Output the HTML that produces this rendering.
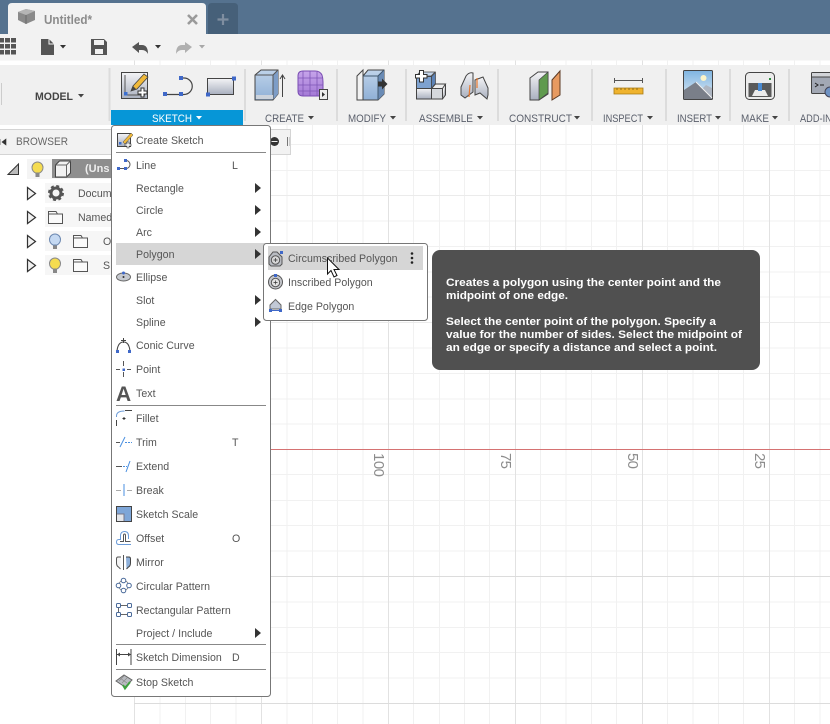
<!DOCTYPE html>
<html><head><meta charset="utf-8"><style>
html,body{margin:0;padding:0;background:#fff;width:830px;height:724px;overflow:hidden}
svg{display:block;font-family:"Liberation Sans",sans-serif}
.m{font-size:10.6px;fill:#555;letter-spacing:.03px}
.tb{font-size:11px;fill:#5a5f6b}
.t{font-size:11px;font-weight:bold;fill:#fff}
.mj{stroke:#e2e2e2;fill:none}
.mn{stroke:#f1f1f1;fill:none}
</style></head><body>
<svg width="830" height="724" viewBox="0 0 830 724" xmlns="http://www.w3.org/2000/svg">
<defs>
<linearGradient id="bl" x1="0" y1="0" x2="0" y2="1"><stop offset="0" stop-color="#bfd3ea"/><stop offset="1" stop-color="#8fb0d6"/></linearGradient>
<linearGradient id="gr" x1="0" y1="0" x2="0" y2="1"><stop offset="0" stop-color="#f4f4f6"/><stop offset="1" stop-color="#a9b0bf"/></linearGradient>
<linearGradient id="sky" x1="0" y1="0" x2="0" y2="1"><stop offset="0" stop-color="#7fb4e0"/><stop offset="1" stop-color="#e0ecf6"/></linearGradient>
<linearGradient id="pu" x1="0" y1="0" x2="0" y2="1"><stop offset="0" stop-color="#c6a4ea"/><stop offset="1" stop-color="#a47ad6"/></linearGradient>
</defs>
<rect width="830" height="724" fill="#fff"/>

<!-- grid -->
<path class="mn" d="M160 60V724M185.500 60V724M210.500 60V724M236 60V724M287 60V724M312.500 60V724M337.500 60V724M363 60V724M413.500 60V724M439.500 60V724M464.500 60V724M489.500 60V724M540.500 60V724M566 60V724M591.500 60V724M616.500 60V724M667.500 60V724M693 60V724M718.500 60V724M743.500 60V724M794.500 60V724M820 60V724"/>
<path class="mn" d="M134 93.500H830M144 119H830M144 144.500H830M144 170.500H830M144 221H830M144 246.500H830M144 272H830M144 297H830M144 348H830M144 373.500H830M144 399H830M144 424H830M134 474.500H830M134 500.500H830M134 525.500H830M134 551H830M134 602H830M134 627.500H830M134 652.500H830M134 678H830"/>
<path class="mj" d="M134.500 60V724M261.500 60V724M388.500 60V724M515.500 60V724M642.500 60V724M769.500 60V724"/>
<path d="M134 195.500H830M134 322.500H830" stroke="#ebebeb" fill="none"/>
<path d="M134 576.500H830M134 703.500H830" stroke="#dcdcdc" fill="none"/>
<path d="M134 449.500H830" stroke="#d57272" fill="none"/>
<g font-size="15" fill="#8c8c8c">
<text transform="translate(374,453) rotate(90)" textLength="24">100</text>
<text transform="translate(501,453) rotate(90)" textLength="16">75</text>
<text transform="translate(628,453) rotate(90)" textLength="16">50</text>
<text transform="translate(755,453) rotate(90)" textLength="16">25</text>
</g>

<!-- title bar -->
<rect width="830" height="34" fill="#55728f"/>
<path d="M8 34V7q0-4 4-4H202q4 0 4 4V34Z" fill="#f2f2f2"/>
<path d="M208 34V7q0-4 4-4H234q4 0 4 4V34Z" fill="#466079"/>
<path d="M18 12l8-3 9 2v9l-9 4-8-4Z" fill="#8a8a8a"/><path d="M18 12l8 3 9-4-9-2Z" fill="#b5b5b5"/><path d="M26 15v9" stroke="#6a6a6a"/>
<text x="44" y="24" font-size="12.500" font-weight="bold" fill="#8b8b8b" textLength="48" lengthAdjust="spacingAndGlyphs">Untitled*</text>
<path d="M188 15l9 9M197 15l-9 9" stroke="#9a9a9a" stroke-width="2.600"/>
<path d="M223 14v11M217.500 19.500h11" stroke="#7f8ea0" stroke-width="2.200"/>

<!-- quick access -->
<rect y="34" width="830" height="26.500" fill="#f2f2f2"/>
<g fill="#555"><rect x="-1" y="38" width="5" height="4.500"/><rect x="5" y="38" width="5" height="4.500"/><rect x="11" y="38" width="5" height="4.500"/><rect x="-1" y="44" width="5" height="4.500"/><rect x="5" y="44" width="5" height="4.500"/><rect x="11" y="44" width="5" height="4.500"/><rect x="-1" y="50" width="5" height="4.500"/><rect x="5" y="50" width="5" height="4.500"/><rect x="11" y="50" width="5" height="4.500"/></g>
<path d="M41 39H49L54 44V55H41Z" fill="#555"/><path d="M49 39V44H54" fill="none" stroke="#f2f2f2"/>
<path d="M60 45h6l-3 3.500Z" fill="#333"/>
<path d="M91 39H104L107 42V55H91Z" fill="#555"/><rect x="94" y="40" width="10" height="5" fill="#f2f2f2"/><rect x="95" y="49" width="8" height="5" fill="#f2f2f2"/>
<path d="M132 47l7-5v3h3q6 0 6 9q-2-4-6-4h-3v3Z" fill="#555"/>
<path d="M155 45h6l-3 3.500Z" fill="#333"/>
<path d="M192 47l-7-5v3h-3q-6 0-6 9q2-4 6-4h3v3Z" fill="#b0b0b0"/>
<path d="M199 45h6l-3 3.500Z" fill="#a8a8a8"/>

<!-- toolbar -->
<rect y="65" width="830" height="60" fill="#f0f0f0"/>
<rect x="1" y="83" width="1" height="22" fill="#ccc"/>
<text x="35" y="100" font-size="11" font-weight="bold" fill="#444" textLength="38" lengthAdjust="spacingAndGlyphs">MODEL</text>
<path d="M78 94h6l-3 3.500Z" fill="#444"/>
<g fill="#dcdcdc"><rect x="108.500" y="68" width="2" height="53"/><rect x="244" y="69" width="2" height="52"/><rect x="336" y="69" width="2" height="52"/><rect x="405" y="69" width="2" height="52"/><rect x="497" y="69" width="2" height="52"/><rect x="591" y="69" width="2" height="52"/><rect x="665" y="69" width="2" height="52"/><rect x="729" y="69" width="2" height="52"/><rect x="788" y="69" width="2" height="52"/></g>
<rect x="111" y="110" width="132" height="15" fill="#0696d7"/>
<text x="152" y="122" font-size="11" fill="#fff" textLength="40" lengthAdjust="spacingAndGlyphs">SKETCH</text>
<path d="M196 116h6l-3 3.500Z" fill="#fff"/>
<text class="tb" x="265" y="122" textLength="39" lengthAdjust="spacingAndGlyphs">CREATE</text><path d="M308 116h6l-3 3.500Z" fill="#444"/>
<text class="tb" x="348" y="122" textLength="38" lengthAdjust="spacingAndGlyphs">MODIFY</text><path d="M390 116h6l-3 3.500Z" fill="#444"/>
<text class="tb" x="419" y="122" textLength="54" lengthAdjust="spacingAndGlyphs">ASSEMBLE</text><path d="M477 116h6l-3 3.500Z" fill="#444"/>
<text class="tb" x="509" y="122" textLength="63" lengthAdjust="spacingAndGlyphs">CONSTRUCT</text><path d="M574 116h6l-3 3.500Z" fill="#444"/>
<text class="tb" x="603" y="122" textLength="40" lengthAdjust="spacingAndGlyphs">INSPECT</text><path d="M647 116h6l-3 3.500Z" fill="#444"/>
<text class="tb" x="677" y="122" textLength="35" lengthAdjust="spacingAndGlyphs">INSERT</text><path d="M715 116h6l-3 3.500Z" fill="#444"/>
<text class="tb" x="741" y="122" textLength="28" lengthAdjust="spacingAndGlyphs">MAKE</text><path d="M772 116h6l-3 3.500Z" fill="#444"/>
<text class="tb" x="800" y="122" textLength="38" lengthAdjust="spacingAndGlyphs">ADD-INS</text>

<!-- sketch icons -->
<rect x="121.500" y="72.500" width="26" height="26" fill="url(#gr)" stroke="#444"/>
<path d="M125 75v20h20" fill="none" stroke="#555"/>
<rect x="124" y="92" width="3.500" height="3.500" fill="#3b6fd0"/>
<path d="M131 91l2-5 11-12 4 3-11 12Z" fill="#f0b93a" stroke="#444" stroke-width=".8"/><path d="M131 91l2-5 3 3Z" fill="#444"/>
<path d="M141 88h3v3h3v3h-3v3h-3v-3h-3v-3h3Z" fill="#fff" stroke="#333"/>
<path d="M165 94.500H181M181 78H184a8 8 0 0 1 0 16.500H181" fill="none" stroke="#444" stroke-width="1.200"/>
<g fill="#3f68c8"><rect x="163" y="92" width="4" height="4"/><rect x="179" y="92" width="4" height="4"/><rect x="179" y="76" width="4" height="4"/></g>
<rect x="207.500" y="78.500" width="26" height="16" fill="url(#gr)" stroke="#444"/>
<rect x="206" y="92.500" width="4" height="4" fill="#3f68c8"/><rect x="232" y="76.500" width="4" height="4" fill="#3f68c8"/>

<!-- create -->
<path d="M255 75l6-5h17v24l-5 6H255Z" fill="url(#bl)" stroke="#444"/><path d="M273 75l5-5v24l-5 6Z" fill="#7d9dc7"/><path d="M255 75h18v25M273 75l5-5" fill="none" stroke="#555"/><rect x="256" y="95" width="17" height="4" fill="#ccd3dc"/>
<path d="M282.500 97V75M280 79l2.500-4 2.500 4" fill="none" stroke="#444"/>
<path d="M298 76q0-5 5-5h12q5 0 7 4q1 3 1 7v10q0 4-4 4H303q-5 0-5-5Z" fill="url(#pu)" stroke="#7a4db3"/>
<path d="M303 71V96M310 71V96M317 72V96M298 78H323M298 85H323M298 91H320" fill="none" stroke="#7f56b6" stroke-width=".8"/>
<rect x="319.500" y="89.500" width="8" height="10" fill="#eee" stroke="#444"/><path d="M322 92l3 2.500-3 2.500Z" fill="#333"/>

<!-- modify -->
<path d="M357 76l6-6v30h-6Z" fill="#f2f2f2" stroke="#444"/>
<path d="M363 76l5-6h16v24l-6 6H363Z" fill="url(#bl)" stroke="#444"/><path d="M378 76l6-6v24l-6 6Z" fill="#6a8bb5"/><path d="M363 76h15v24M378 76l6-6" fill="none" stroke="#40586f"/>
<path d="M378 81.500h4v-3l5.500 5.500-5.500 5.500v-3h-4Z" fill="#333"/>

<!-- assemble -->
<path d="M420 72h15l-4 4h-15Z" fill="#c6d8ee" stroke="#444" stroke-width=".7"/>
<rect x="416.500" y="76.500" width="15" height="12" fill="#7ea2d0" stroke="#444"/><path d="M431.500 76.500l4-4v11l-4 5Z" fill="#5d83b6" stroke="#444" stroke-width=".7"/>
<rect x="416.500" y="88.500" width="15" height="10.500" fill="url(#gr)" stroke="#444"/>
<rect x="431.500" y="88.500" width="11" height="10.500" fill="#d5d8dc" stroke="#444"/><path d="M431.500 88.500l4-4.500h10l-3 4.500Z" fill="#eee" stroke="#444"/><path d="M442.500 99l3-4V84" fill="#b9bcc2" stroke="#444"/>
<path d="M419.500 74.500v-4h4v4h3.500v3.500h-3.500v4h-4v-4h-4v-3.500Z" fill="#fff" stroke="#333"/>
<path d="M461 87l5-11q3-4 7-3v19l-8 6-4-3Z" fill="url(#gr)" stroke="#444"/><path d="M475 80l8-3 5 11v7l-1 4-7-6-5 2Z" fill="url(#gr)" stroke="#444"/><path d="M470 85l-1 12M477 78v10" stroke="#e8782d" stroke-width="1.200"/>

<!-- construct -->
<path d="M530 78l8-6h10v22l-9 6h-9Z" fill="url(#gr)" stroke="#444"/>
<path d="M539 80l9-8v21l-9 7Z" fill="#5f9a4e" stroke="#444" stroke-width=".7"/>
<path d="M552 80l8-9v24l-8 5Z" fill="#e79a60" stroke="#5b3a25"/>

<!-- inspect -->
<path d="M614.500 78v5M642.500 78v5M614.500 80.500H642.500" stroke="#555" fill="none"/>
<path d="M614 88h29v6H614Z" fill="#efb32e" stroke="#a87a12" stroke-width=".8"/><path d="M617 88v2M621 88v2M625 88v2M629 88v2M633 88v2M637 88v2" stroke="#8e6c18"/>

<!-- insert -->
<rect x="683.500" y="70.500" width="29" height="29" rx="1" fill="url(#sky)" stroke="#444"/>
<circle cx="703.500" cy="78" r="3" fill="#fbf3c7"/>
<path d="M701 90l5-5 6 3v10Z" fill="#aeb6c2"/>
<path d="M684 99V90l12-8 7 7 9 9v1Z" fill="#7a7f89"/><path d="M696 82l7 7 9 9" fill="none" stroke="#f1f1f1"/>

<!-- make -->
<rect x="745.500" y="72.500" width="29" height="27" rx="4" fill="#ececec" stroke="#444"/>
<rect x="748.500" y="83" width="23" height="14" fill="#5a5a5a"/><path d="M752 96l3-6h10l3 6Z" fill="#ececec"/>
<rect x="758" y="83" width="4" height="8" fill="#4a89cf"/><rect x="769" y="78" width="2" height="2" fill="#2d8a3e"/>

<!-- add-ins -->
<rect x="811.500" y="72.500" width="19" height="21" rx="1" fill="#a2a8b4" stroke="#444"/><path d="M812 77H830" stroke="#444"/><rect x="812" y="73" width="18" height="3.500" fill="#d2d4d8"/>
<path d="M815 83l3 2-3 2M820 85h4" fill="none" stroke="#222"/>
<circle cx="830" cy="92" r="5" fill="#6f93c4" stroke="#445"/>

<!-- browser -->
<rect y="129" width="291" height="26" fill="#f2f2f2"/>
<path d="M0 129.500H290.500V154.500H0" fill="none" stroke="#d4d4d4"/>
<path d="M0 139v6M6 139l-4 3 4 3Z" fill="#333" stroke="#333" stroke-width=".6"/>
<text x="16" y="145" font-size="10.800" fill="#666" textLength="52" lengthAdjust="spacingAndGlyphs">BROWSER</text>
<circle cx="274.500" cy="141.500" r="4.500" fill="#333"/><path d="M271.500 141.500h6" stroke="#eee"/>
<path d="M287.500 137v9" stroke="#777"/><path d="M289.500 137v9" stroke="#ccc"/>

<rect x="27" y="159" width="84" height="20" fill="#f4f4f4"/>
<path d="M8 174.500L18.500 164V174.500Z" fill="#bbb" stroke="#333"/>
<path d="M35.500 173q-3.500-2-3.500-5.500a5.500 5.500 0 0 1 11 0q0 3.500-3.500 5.500Z" fill="#f5dc50" stroke="#888"/><rect x="35.500" y="173.500" width="4" height="3.500" fill="#888"/>
<rect x="52" y="159" width="59" height="19" fill="#8e8e8e"/>
<path d="M55.500 165l4-4h11v12l-4 4H55.500Z" fill="#f2f2f2" stroke="#444"/><path d="M55.500 165h11v12M66.500 165l4-4" fill="none" stroke="#666"/>
<text x="85" y="172" font-size="11" font-weight="bold" fill="#eee">(Uns</text>

<rect x="45" y="183" width="66" height="20" fill="#f6f6f6"/>
<rect x="45" y="207" width="66" height="20" fill="#f6f6f6"/>
<rect x="45" y="231" width="66" height="20" fill="#f6f6f6"/>
<rect x="45" y="255" width="66" height="20" fill="#f6f6f6"/>
<g fill="#f2f2f2" stroke="#333" stroke-width="1.200"><path d="M27.500 187.500l8 6-8 6Z"/><path d="M27.500 211.500l8 6-8 6Z"/><path d="M27.500 235.500l8 6-8 6Z"/><path d="M27.500 259.500l8 6-8 6Z"/></g>
<circle cx="56" cy="193" r="5" fill="none" stroke="#555" stroke-width="3"/><circle cx="56" cy="193" r="7" fill="none" stroke="#555" stroke-width="2" stroke-dasharray="3 2.500"/>
<text x="78" y="197" font-size="10.600" fill="#555">Docum</text>
<path d="M48.500 223.500V211.500H56l1.500 2.500H62.500V223.500ZM48.500 214H57.500" fill="#fafafa" stroke="#555"/>
<text x="78" y="221" font-size="10.600" fill="#555">Named</text>
<path d="M53 245q-3.500-2-3.500-5.500a5.500 5.500 0 0 1 11 0q0 3.500-3.500 5.500Z" fill="#c5d9f2" stroke="#6b87b0"/><rect x="53" y="245.500" width="4" height="3.500" fill="#888"/>
<path d="M73.500 247.500V235.500H81l1.500 2.500H87.500V247.500ZM73.500 238H82.500" fill="#fafafa" stroke="#555"/>
<text x="103" y="245" font-size="10.600" fill="#555">O</text>
<path d="M53 269q-3.500-2-3.500-5.500a5.500 5.500 0 0 1 11 0q0 3.500-3.500 5.500Z" fill="#f5dc50" stroke="#888"/><rect x="53" y="269.500" width="4" height="3.500" fill="#888"/>
<path d="M73.500 271.500V259.500H81l1.500 2.500H87.500V271.500ZM73.500 262H82.500" fill="#fafafa" stroke="#555"/>
<text x="103" y="269" font-size="10.600" fill="#555">S</text>

<!-- main menu -->
<rect x="111.500" y="125.500" width="159" height="571" rx="3" fill="#fff" stroke="#777"/>
<rect x="116" y="243" width="150" height="22" fill="#d6d6d6"/>
<path d="M116 152.500H266M116 405.500H266M116 644.500H266M116 669.500H266" stroke="#888" fill="none"/>
<text class="m" x="136" y="144">Create Sketch</text>
<text class="m" x="136" y="169">Line</text><text class="m" x="232" y="169">L</text>
<text class="m" x="136" y="192">Rectangle</text>
<text class="m" x="136" y="214">Circle</text>
<text class="m" x="136" y="236">Arc</text>
<text class="m" x="136" y="258">Polygon</text>
<text class="m" x="136" y="281">Ellipse</text>
<text class="m" x="136" y="304">Slot</text>
<text class="m" x="136" y="326">Spline</text>
<text class="m" x="136" y="349">Conic Curve</text>
<text class="m" x="136" y="373">Point</text>
<text class="m" x="136" y="397">Text</text>
<text class="m" x="136" y="422">Fillet</text>
<text class="m" x="136" y="446">Trim</text><text class="m" x="232" y="446">T</text>
<text class="m" x="136" y="470">Extend</text>
<text class="m" x="136" y="494">Break</text>
<text class="m" x="136" y="518">Sketch Scale</text>
<text class="m" x="136" y="542">Offset</text><text class="m" x="232" y="542">O</text>
<text class="m" x="136" y="566">Mirror</text>
<text class="m" x="136" y="590">Circular Pattern</text>
<text class="m" x="136" y="614">Rectangular Pattern</text>
<text class="m" x="136" y="637">Project / Include</text>
<text class="m" x="136" y="661">Sketch Dimension</text><text class="m" x="232" y="661">D</text>
<text class="m" x="136" y="686">Stop Sketch</text>
<g fill="#333"><path d="M255 183l6 5-6 5Z"/><path d="M255 205l6 5-6 5Z"/><path d="M255 227l6 5-6 5Z"/><path d="M255 249l6 5-6 5Z"/><path d="M255 295l6 5-6 5Z"/><path d="M255 317l6 5-6 5Z"/><path d="M255 628l6 5-6 5Z"/></g>

<!-- menu icons -->
<rect x="117.500" y="133.500" width="13" height="13" fill="url(#gr)" stroke="#444"/><path d="M123 142l8-9 2 2-8 9Z" fill="#f0b93a" stroke="#444" stroke-width=".5"/><rect x="119" y="142" width="2.500" height="2.500" fill="#3b6fd0"/><path d="M127 142h2v2h2v2h-2v2h-2v-2h-2v-2h2Z" fill="#fff" stroke="#333" stroke-width=".6"/>
<path d="M118 168.500H125M125 160.500h1a4 4 0 0 1 0 8h-1" fill="none" stroke="#555"/><g fill="#3f68c8"><rect x="117" y="167" width="3" height="3"/><rect x="124" y="167" width="3" height="3"/><rect x="124" y="159" width="3" height="3"/></g>
<ellipse cx="123.500" cy="277" rx="7" ry="4" fill="#c6c9cf" stroke="#666"/><circle cx="123.500" cy="273" r="1.500" fill="#3f68c8"/><circle cx="123.500" cy="277" r="1" fill="#333"/>
<path d="M117 351q1-9 6.500-9t6.500 9" fill="none" stroke="#444" stroke-width="1.100"/><path d="M123.500 338v5M121 340.500h5" stroke="#444"/><rect x="116" y="350" width="3" height="3" fill="#3f68c8"/><rect x="128" y="350" width="3" height="3" fill="#3f68c8"/>
<path d="M116 369.500h4M127 369.500h4M123.500 361v5M123.500 372v5" stroke="#555"/><rect x="122.500" y="368.500" width="2.500" height="2.500" fill="#3f68c8"/>
<text x="116" y="401" font-size="21" font-weight="bold" fill="#555">A</text>
<path d="M116.500 417v-1q0-5 8-5" fill="none" stroke="#6b9bd8"/><path d="M116.500 420v6M125 410.500h7" stroke="#444"/><path d="M122.500 418.500h3M124 417v3" stroke="#333"/>
<path d="M116 442.500h4" stroke="#555"/><path d="M120 447l5-10" stroke="#4a8fe0"/><path d="M125 442.500h7" stroke="#4a8fe0" stroke-dasharray="2 1"/>
<path d="M116 466.500h6" stroke="#555"/><path d="M123 466.500h4" stroke="#4a8fe0" stroke-dasharray="2 1"/><path d="M126 472l4-11" stroke="#4a8fe0"/>
<path d="M116 490.500h5M127 490.500h5" stroke="#aaa"/><path d="M124 484v12" stroke="#4a8fe0"/>
<rect x="116.500" y="506.500" width="15" height="15" fill="#7ea6d8" stroke="#444"/><rect x="117" y="514" width="7" height="7" fill="#e4e6ea"/><path d="M117 514h7v7" fill="none" stroke="#778"/>
<path d="M131 544.500H119q-2.500 0-2.500-2.500t2.500-2.500h1.500v-3.500q0-4.500 4-4.500t4 4.500v3" fill="none" stroke="#6b9bd8"/><path d="M120 541.500h3.500v-6q0-1.500 1-1.500t1 1.500v6h5" fill="none" stroke="#555"/>
<path d="M123.500 555v15" stroke="#555"/><path d="M121 557h-3q-1.500 0-1.500 2v4q0 3 2 4l2 2" fill="#f4f4f4" stroke="#555"/><path d="M126 557h3q1.500 0 1.500 2v4q0 3-2 4l-2 2" fill="#8eb0da" stroke="#444"/>
<circle cx="123.500" cy="585.500" r="5" fill="none" stroke="#777" stroke-width=".7"/>
<g fill="#fff" stroke="#4a6a9a"><circle cx="123.500" cy="580.500" r="2.300"/><circle cx="118.500" cy="585.500" r="2.300"/><circle cx="129" cy="585.500" r="2.300"/><circle cx="123.500" cy="590.500" r="2.300"/></g>
<g fill="#fff" stroke="#4a6a9a"><rect x="116.500" y="603.500" width="4" height="4" rx="1"/><rect x="127.500" y="603.500" width="4" height="4" rx="1"/><rect x="116.500" y="612.500" width="4" height="4" rx="1"/><rect x="127.500" y="612.500" width="4" height="4" rx="1"/></g><path d="M121 605.500h6M121 614.500h6M118.500 608v4" stroke="#666"/>
<path d="M116.500 649v16M131 649v16M117 654.500h14" fill="none" stroke="#444"/><path d="M117 654.500l3-2v4ZM131 654.500l-3-2v4Z" fill="#444"/>
<path d="M116 681l8-6 8 5-7 7Z" fill="#b8bbc0" stroke="#666"/><path d="M120 678l7 5M124 676l-5 5M127 678l-5 5" stroke="#888" stroke-width=".6"/><path d="M123 685l2 3.500 5-6.500" fill="none" stroke="#3ea23e" stroke-width="2"/>

<!-- submenu -->
<rect x="263.500" y="243.500" width="164" height="77" rx="3" fill="#fff" stroke="#777"/>
<rect x="268" y="246" width="155" height="24" fill="#d6d6d6"/>
<text class="m" x="288" y="262">Circumscribed Polygon</text>
<text class="m" x="288" y="286">Inscribed Polygon</text>
<text class="m" x="288" y="310">Edge Polygon</text>
<circle cx="412" cy="253.500" r="1.300" fill="#222"/><circle cx="412" cy="258" r="1.300" fill="#222"/><circle cx="412" cy="262.500" r="1.300" fill="#222"/>
<path d="M269 257l4-5h4l5 5v7l-2 2H271l-2-2Z" fill="#b9bcc2" stroke="#555"/><circle cx="275.500" cy="260" r="4.200" fill="#d8d8d8" stroke="#555"/><path d="M273.500 260h4M275.500 258v4" stroke="#333" stroke-width=".7"/><rect x="280" y="251" width="3" height="3" fill="#3f68c8"/>
<circle cx="275.500" cy="282" r="7" fill="#c4c6cb" stroke="#555"/><circle cx="275.500" cy="282.500" r="4.200" fill="#e2e2e2" stroke="#555"/><path d="M273.500 282.500h4M275.500 280.500v4" stroke="#333" stroke-width=".7"/><rect x="274" y="274" width="3" height="3" fill="#3f68c8"/>
<path d="M270 309v-4l5.500-5.500 5.500 5.500v4Z" fill="#c2c9d6" stroke="#666"/><rect x="269" y="309" width="3" height="3" fill="#3f68c8"/><rect x="279" y="309" width="3" height="3" fill="#3f68c8"/><path d="M271 310.500h9" stroke="#3f68c8"/>

<!-- cursor -->
<path d="M327.500 258V274L331 270.500L334 277L337 275.500L334 269.500H339Z" fill="#fff" stroke="#111"/>

<!-- tooltip -->
<rect x="432" y="250" width="328" height="120" rx="8" fill="#505050"/>
<text class="t" x="446" y="286" textLength="275" lengthAdjust="spacingAndGlyphs">Creates a polygon using the center point and the</text>
<text class="t" x="446" y="299" textLength="122" lengthAdjust="spacingAndGlyphs">midpoint of one edge.</text>
<text class="t" x="446" y="325" textLength="270" lengthAdjust="spacingAndGlyphs">Select the center point of the polygon. Specify a</text>
<text class="t" x="446" y="338" textLength="296" lengthAdjust="spacingAndGlyphs">value for the number of sides. Select the midpoint of</text>
<text class="t" x="446" y="351" textLength="271" lengthAdjust="spacingAndGlyphs">an edge or specify a distance and select a point.</text>
</svg>
</body></html>
